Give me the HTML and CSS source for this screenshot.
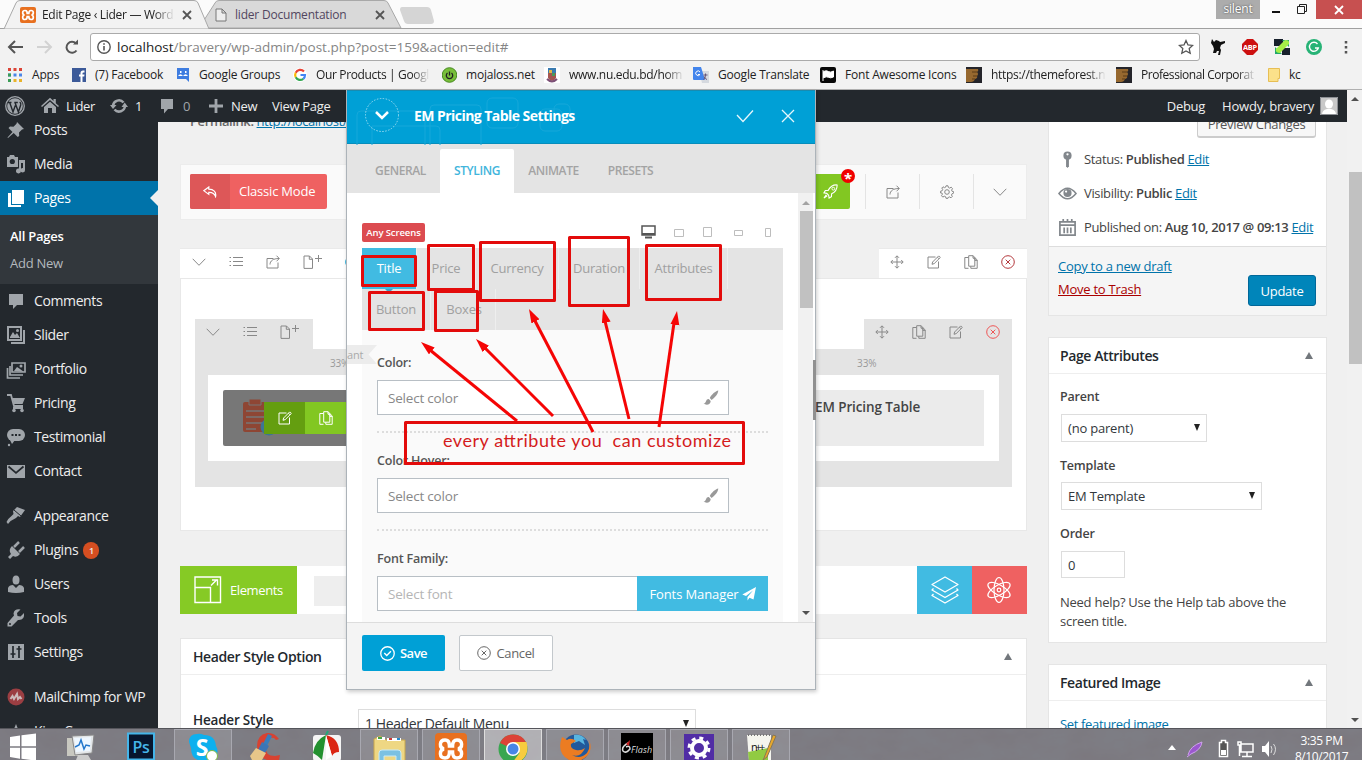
FILE: index.html
```html
<!DOCTYPE html>
<html lang="en">
<head>
<meta charset="utf-8">
<title>Edit Page ‹ Lider — WordPress</title>
<link rel="stylesheet" href="styles.css">
</head>
<body>
<svg class="defs" width="0" height="0">
  <defs>
    <symbol id="chev" viewBox="0 0 14 14"><path d="M.7 3.8 7 10.3l6.3-6.5" fill="none" stroke="currentColor"/></symbol>
    <symbol id="list" viewBox="0 0 14 14"><path d="M4 2.500h10M4 6.500h10M4 10.500h10M.5 2.500h1.500M.5 6.500h1.500M.5 10.500h1.500" fill="none" stroke="currentColor"/></symbol>
    <symbol id="share" viewBox="0 0 14 14"><path d="M7.500 3.500H1v9.500h11V7.500M4 9.500C4 6 7 3.500 13 3.500M10.500.7l2.800 2.800-2.800 2.800" fill="none" stroke="currentColor"/></symbol>
    <symbol id="newdoc" viewBox="0 0 20 14"><path d="M1 1h5.500L9.500 4v9.400H1zM6.300 1v3.300h3.200M12 3.500h7M15.500 0v7" fill="none" stroke="currentColor"/></symbol>
    <symbol id="move" viewBox="0 0 14 14"><path d="M7 1v12M1 7h12M5 2.800 7 .8l2 2M5 11.200l2 2 2-2M2.800 5l-2 2 2 2M11.200 5l2 2-2 2" fill="none" stroke="currentColor"/></symbol>
    <symbol id="edit" viewBox="0 0 14 14"><path d="M8.500 2H1v11h10.500V6.500M5 9.300l.6-2.300L11.700.9l1.600 1.600-6.100 6.100zM10.400 2.200 12 3.800" fill="none" stroke="currentColor"/></symbol>
    <symbol id="copy" viewBox="0 0 14 14"><path d="M4.500 13.300H.8V2.500h3.700M4.700.7h4.500l1.600 2v8.500H4.700zM9 .9v2.300h1.700M9.500 3h1.700l2 1.900v8.400H6.800v-2M11 3.200v2.200h2.200" fill="none" stroke="currentColor"/></symbol>
    <symbol id="xcirc" viewBox="0 0 14 14"><path d="M4.700 4.700l4.600 4.600M9.300 4.700 4.700 9.300" stroke="currentColor"/><circle cx="7" cy="7" r="6.300" fill="none" stroke="currentColor"/></symbol>
    <symbol id="okcirc" viewBox="0 0 14 14"><path d="M4 6.500l2.300 2.400 3.900-4" fill="none" stroke="currentColor" stroke-width="1.300"/><circle cx="7" cy="7" r="6.300" fill="none" stroke="currentColor" stroke-width="1.200"/></symbol>
    <symbol id="gear" viewBox="0 0 14 14"><circle cx="7" cy="7" r="2.300" fill="none" stroke="currentColor"/><path d="M6 .8h2l.4 1.700 1.300.6 1.500-.9 1.300 1.400-.9 1.500.5 1.200 1.600.4v1.400l-1.600.6-.6 1.300.8 1.500-1.300 1.300-1.500-.9-1.200.5L8 13.300H6l-.4-1.600-1.300-.5-1.500.9-1.300-1.400.9-1.500-.5-1.200L.6 8V6.200l1.500-.4.6-1.200-.9-1.600 1.200-1.200 1.600.9 1-.5z" fill="none" stroke="currentColor"/></symbol>
    <symbol id="rocket" viewBox="0 0 16 16"><path d="M15 1c-4-.3-7 1.200-9.500 5.800L2.500 7 1 9.500l3 .5 2 2 .5 3L9 13.500l.2-3C14 8 15.300 5 15 1zM3.500 11.500 1 15l3.500-2.500" fill="none" stroke="currentColor" stroke-width="1.200"/><circle cx="11" cy="5" r="1.500" fill="none" stroke="currentColor"/></symbol>
    <symbol id="reply" viewBox="0 0 14 12"><path d="M5.800 1 .8 4.700l5 3.700V6.300c3.500-.2 5.500.7 6.800 4.200C13.500 6 10.500 3.300 5.800 3.200z" fill="none" stroke="currentColor" stroke-width="1.200"/></symbol>
    <symbol id="brush" viewBox="0 0 16 16"><path d="M15.300.6c-3 .6-6.500 3.800-8.500 7.400l1.800 1.900C12 7.600 15 4.200 15.300.6zM5.800 8.900c-2 0-2.500 1.300-2.900 2.600C2.500 12.700 1.600 13.500.5 13.600c2.400 1.900 7.200 1.500 7.200-2.500z" fill="currentColor"/></symbol>
    <symbol id="bubble" viewBox="0 0 16 16"><path d="M2 1h12v10H9l-4 4.500V11H2z" fill="currentColor"/></symbol>
    <symbol id="cross" viewBox="0 0 12 12"><path d="M2 2l8 8M10 2l-8 8" stroke="currentColor" stroke-width="1.800"/></symbol>
    <symbol id="xampp" viewBox="0 0 16 16"><rect width="16" height="16" rx="2" fill="#e8701f"/><path d="M5 3.500c-3 0-3 4-.5 4.500-2.500.5-2.500 4.500.5 4.500 2 0 2.200-1.500 2.200-3h1.600c0 1.500.2 3 2.200 3 3 0 3-4 .5-4.500 2.500-.5 2.500-4.500-.5-4.500-2 0-2.200 1.500-2.200 3H7.200c0-1.500-.2-3-2.200-3z" fill="none" stroke="#fff" stroke-width="1.700"/></symbol>
    <symbol id="fist" viewBox="0 0 16 16"><path d="M0 0h16v16H0z" fill="#24242a"/><path d="M0 2h12q1 2-1 3 2 2 0 4 1 2-2 3-1 3-4 3H0z" fill="#96682f"/><path d="M6 5h5M7 9h4M6 12h3" stroke="#5b3a16"/></symbol>
  </defs>
</svg>

<div class="screen">
  <header class="chrome">
    <div class="tabstrip">
      <svg class="tabshapes" width="440" height="29"><path d="M199 28 215 3q1-2.500 4-2.500h165q3 0 4 2.500l13 25z" fill="#d9d9d9" stroke="#a8a8a8"/><path d="M0 28.500h1362" stroke="#a0a0a0"/><path d="M4 29 16 3q1-2.500 4-2.500h174q3 0 4 2.500L209 29z" fill="#f2f2f2" stroke="#a8a8a8"/><path d="M402 7h25q3 0 4 3l3 11q0 3-3 3h-23q-3 0-4-3l-4-11q0-3 2-3z" fill="#d5d5d5"/></svg>
      <div class="tab first"><svg width="16" height="16"><use href="#xampp"/></svg><span class="fade">Edit Page ‹ Lider — Word</span><svg class="tx" width="12" height="12"><use href="#cross"/></svg></div>
      <div class="tab second"><svg width="12" height="14"><path d="M1 1h6l4 4v8H1zM7 1v4h4" fill="#eee" stroke="#777"/></svg><span>lider Documentation</span><svg class="tx" width="12" height="12"><use href="#cross"/></svg></div>
      <div class="winctl"><span class="user">silent</span><svg width="56" height="19"><path d="M12 12h8" stroke="#111" stroke-width="2"/><path d="M37.500 6.500h7v7h-7zM39.500 6V4.500h7v7H45" fill="none" stroke="#222"/></svg><span class="wclose"><svg width="12" height="12"><use href="#cross"/></svg></span></div>
    </div>
    <div class="toolbar">
      <svg width="82" height="32"><g fill="none" stroke="#555" stroke-width="2"><path d="M15 12 9 18l6 6M9.500 18H23"/><path d="M45 12l6 6-6 6M50.500 18H37" stroke="#d2d2d2"/><path d="M76.500 21.500a5.500 5.500 0 1 1-.5-7"/><path d="M73 15.500h5V10.500z" fill="#555" stroke="none"/></g></svg>
      <div class="omni"><svg width="16" height="16"><circle cx="8" cy="8" r="6.200" fill="none" stroke="#555" stroke-width="1.400"/><path d="M8 7v4.500M8 4.200v1.600" stroke="#555" stroke-width="1.600"/></svg><span><b>localhost</b>/bravery/wp-admin/post.php?post=159&amp;action=edit#</span><svg class="star" width="16" height="16"><path d="M8 1.500l2 4.400 4.700.5-3.500 3.200 1 4.700L8 11.900l-4.200 2.400 1-4.700L1.300 6.400 6 5.900z" fill="none" stroke="#555" stroke-width="1.300"/></svg></div>
      <div class="ext">
        <svg width="16" height="16"><path d="M2 0l2 3 2-2 3 1 1 1 5-1v2l-4 2-1 3 1 2-1 5H8l1-4H7l-1 2H3l1-4-1-3-2-3z" fill="#111"/></svg>
        <svg width="16" height="16"><path d="M5 0h6l5 5v6l-5 5H5l-5-5V5z" fill="#cd1010"/><text x="8" y="11" font-size="7.500" font-weight="700" fill="#fff" text-anchor="middle" textLength="14" lengthAdjust="spacingAndGlyphs">ABP</text></svg>
        <svg width="16" height="16"><path d="M0 0h9v7H0zM8 9h8v7H8z" fill="#17202b"/><path d="M8 1h7v7zM1 8v7h7z" fill="#20a86a"/><path d="M2 10 11 1q5 0 4 4l-9 9q-5 0-4-4z" fill="#a5ee48"/></svg>
        <svg width="16" height="16"><circle cx="8" cy="8" r="8" fill="#27b376"/><path d="M11.500 5A4.500 4.500 0 1 0 12.300 9H9" fill="none" stroke="#fff" stroke-width="1.400"/></svg>
        <svg width="16" height="16"><path d="M8 2v2.500M8 7v2.500M8 12v2.500" stroke="#555" stroke-width="2.500"/></svg>
      </div>
    </div>
    <nav class="bookmarks">
      <a class="b1"><svg width="14" height="14"><g stroke-width="3" stroke-dasharray="3 2.500"><path d="M0 1.500h14" stroke="#dc4437"/><path d="M0 7h14" stroke="#4a86e8"/><path d="M0 12.500h14" stroke="#e9b32a"/><path d="M0 7h3M0 12.500h3" stroke="#3b9d55"/></g></svg><span>Apps</span></a>
      <a class="b2"><svg width="14" height="14"><rect width="14" height="14" fill="#3c5a99"/><path d="M8.500 14V8.500H7v-2h1.500V5q0-2.500 2.500-2.500h1.500v2h-1q-1 0-1 1v1h2l-.3 2h-1.700V14z" fill="#fff"/></svg><span>(7) Facebook</span></a>
      <a class="b3"><svg width="14" height="14"><path d="M1 0h12v14l-3-3H1z" fill="#3f7de0"/><path d="M2 8q2.500-3.500 5 0zM7 8q2.500-3.500 5 0z" fill="#fff"/><path d="M4 3h1.500v2H4zM9 3h1.500v2H9z" fill="#fff"/></svg><span>Google Groups</span></a>
      <a class="b4"><svg width="14" height="14"><rect width="14" height="14" rx="7" fill="#fff"/><g fill="none" stroke-width="2.200"><path d="M11 3.500A5 5 0 0 0 2.700 4.800" stroke="#e94335"/><path d="M2.700 4.800a5 5 0 0 0 0 4.500" stroke="#fabb05"/><path d="M2.700 9.300a5 5 0 0 0 7.600 1.500" stroke="#34a853"/><path d="M10.300 10.800A5 5 0 0 0 12 7H7.500" stroke="#4285f4"/></g></svg><span class="fade">Our Products | Googl</span></a>
      <a class="b5"><svg width="15" height="16"><circle cx="7.500" cy="8" r="7.300" fill="#78be3a" stroke="#468a20"/><path d="M5.500 6a3.200 3.200 0 1 0 4 0M7.500 4.500v4" fill="none" stroke="#222" stroke-width="1.300"/></svg><span>mojaloss.net</span></a>
      <a class="b6"><svg width="16" height="16"><path d="M0 0h16v16H0z" fill="#fff"/><path d="M4 1h8v5H4z" fill="#3b7bb0"/><path d="M4 6h8v5q-4 6-8 0z" fill="#a55650"/><path d="M5 3h3v3H5z" fill="#e4b743"/><path d="M8 6h3v3H8z" fill="#4a9b58"/><path d="M3 12q5 5 10 0" stroke="#7c5076" stroke-width="2" fill="none"/></svg><span class="fade">www.nu.edu.bd/hom</span></a>
      <a class="b7"><svg width="16" height="16"><path d="M6 4h10v12H9z" fill="#d5d9df"/><path d="M0 0h8l4 13H1q-1 0-1-1z" fill="#4284ec"/><path d="M7 5a2.300 2.300 0 1 0 0 2.500H5" fill="none" stroke="#fff"/><path d="M10.500 8h4M12.500 6.500V8q0 3-2 4.500M11 9.500q1 2.500 3 3" fill="none" stroke="#657"/></svg><span>Google Translate</span></a>
      <a class="b8"><svg width="16" height="16"><rect width="16" height="16" rx="2" fill="#080808"/><path d="M3 3v11M3.500 4.500q3-1.500 5 0t5-.5v6q-3 1.500-5 .3t-5 .5z" fill="#fff" stroke="#fff"/></svg><span>Font Awesome Icons</span></a>
      <a class="b9"><svg width="16" height="16"><use href="#fist"/></svg><span class="fade">https://themeforest.n</span></a>
      <a class="b10"><svg width="16" height="16"><use href="#fist"/></svg><span class="fade">Professional Corporat</span></a>
      <a class="b11"><svg width="12" height="14"><path d="M.5.500h11v10H10v3H.5z" fill="#fbe18a" stroke="#e7be54"/></svg><span>kc</span></a>
    </nav>
  </header>

  <div class="page">
    <div class="adminbar">
      <svg width="20" height="20" viewBox="0 0 20 20"><circle cx="10" cy="10" r="9.300" fill="none" stroke="#a0a5aa" stroke-width="1.300"/><circle cx="10" cy="10" r="7.800" fill="#a0a5aa"/><path d="M3 6.500h3.500M4.700 6.500l3.300 9.500 2.300-6.500M9.300 6.500h3.500M10 6.500l3.400 9.500 2.300-7q.5-2-1-3" fill="none" stroke="#23282d" stroke-width="1.400"/></svg>
      <svg class="a1" width="18" height="18"><path d="M0 9 9 .8l3.500 3.200V2h2.300v4.200L18 9l-1 1-8-7-8 7z" fill="#a0a5aa"/><path d="M3 10l6-5.300 6 5.300v6h-4v-5H7v5H3z" fill="#a0a5aa"/></svg><span class="a1t">Lider</span>
      <svg class="a2" width="18" height="18"><path d="M3 8.500a6 6 0 0 1 10.500-3M15 9a6 6 0 0 1-10.500 3.500" fill="none" stroke="#a0a5aa" stroke-width="2.500"/><path d="M0 8h6.500L3 12zM11.500 10H18l-3.300-4.500z" fill="#a0a5aa"/></svg><span class="a2t">1</span>
      <svg class="a3" width="16" height="16"><use href="#bubble"/></svg><span class="a3t">0</span>
      <svg class="a4" width="14" height="14"><path d="M7 0v14M0 7h14" stroke="#a0a5aa" stroke-width="2.800"/></svg><span class="a4t">New</span><span class="a5t">View Page</span>
      <span class="debug">Debug</span><span class="howdy">Howdy, bravery</span><svg width="18" height="18"><path d="M0 0h18v18H0z" fill="#c8c8c8"/><ellipse cx="9" cy="7" rx="4" ry="4.500" fill="#fff"/><path d="M2 18q0-5 5-6h4q5 1 5 6z" fill="#fff"/><path d="M.5.500h17v17H.5z" fill="none" stroke="#8c8f94"/></svg>
    </div>
    <div class="pagebody">
      <nav class="side">
        <a class="half"><svg viewBox="0 0 20 20"><path d="M11 2l7 7-2 .5-3 3 .2 3.500-1.500 1-4-4L2 18l-.5-.5L6.500 12l-4-4L4 6.500l3.500.3 3-3z" fill="currentColor"/></svg>Posts</a>
        <a><svg viewBox="0 0 20 20"><path d="M1 3h2l1-2h4l1 2h3v10H1z" fill="currentColor"/><circle cx="6.300" cy="7.500" r="2.600" fill="#23282d"/><path d="M13 6h6v10a2.200 2.200 0 1 1-2-2V9h-2v8a2.500 2.500 0 1 1-2-2.500z" fill="currentColor"/></svg>Media</a>
        <a class="current"><svg viewBox="0 0 20 20"><path d="M6 2h12v14H6z" fill="#fff"/><path d="M2 5h3v12h10v2H2z" fill="#fff"/></svg>Pages</a>
        <div class="submenu"><b>All Pages</b><span>Add New</span></div>
        <a><svg viewBox="0 0 20 20"><path d="M3 3h14v11h-6l-4 4v-4H3z" fill="currentColor"/></svg>Comments</a>
        <a><svg viewBox="0 0 20 20"><path d="M2 2h13v13H2zM5 18h13V5" fill="none" stroke="currentColor" stroke-width="2"/><path d="M4 12l3-5 2 3 2-2 3 5H4z" fill="currentColor"/><circle cx="11.500" cy="5.500" r="1.500" fill="currentColor"/></svg>Slider</a>
        <a><svg viewBox="0 0 20 20"><path d="M6 4h13v9H6zM4 7v9h13M1.500 9v10H14" fill="none" stroke="currentColor" stroke-width="1.700"/><path d="M8 12l3-4 3 2 4 3z" fill="currentColor"/><circle cx="15" cy="7" r="1.500" fill="currentColor"/></svg>Portfolio</a>
        <a><svg viewBox="0 0 20 20"><path d="M1 2h4l3 11h9M7 15h10" fill="none" stroke="currentColor" stroke-width="1.800"/><path d="M6 5h13l-2.500 6H8z" fill="currentColor"/><circle cx="8" cy="17.500" r="1.800" fill="currentColor"/><circle cx="16" cy="17.500" r="1.800" fill="currentColor"/></svg>Pricing</a>
        <a><svg viewBox="0 0 20 20"><rect x="1" y="2" width="18" height="12" rx="6" fill="currentColor"/><path d="M4 13h5l-3 4z" fill="currentColor"/><circle cx="3" cy="18" r="1.200" fill="currentColor"/><path d="M5.500 8h2M9 8h2M12.500 8h2" stroke="#23282d" stroke-width="2"/></svg>Testimonial</a>
        <a><svg viewBox="0 0 20 20"><path d="M1 4h18v13H1z" fill="currentColor"/><path d="M2.500 5.500 10 12l7.500-6.500" fill="none" stroke="#23282d" stroke-width="1.700"/></svg>Contact</a>
        <a class="gap"><svg viewBox="0 0 20 20"><path d="M7 5l4-4 8 3-5 7-2-1-2 2q-5 2-8 6l-1.500-2q1-3 5-6l2-2z" fill="currentColor"/><path d="M8 4l7 6" stroke="#23282d"/></svg>Appearance</a>
        <a><svg viewBox="0 0 20 20"><path d="M6 6l8 8q-3 4-7 2l-3 3-2-2 3-3q-3-4 1-8z" fill="currentColor"/><path d="M8 7l5-5M13 12l5-5" stroke="currentColor" stroke-width="2.500"/></svg>Plugins<i>1</i></a>
        <a><svg viewBox="0 0 20 20"><ellipse cx="10" cy="6" rx="3.500" ry="4.500" fill="currentColor"/><path d="M2 18v-4q1-3 5-3l3 3 3-3q4 0 5 3v4q-8 2-16 0z" fill="currentColor"/></svg>Users</a>
        <a><svg viewBox="0 0 20 20"><path d="M18 5l-3.500 3.500-3-.5-.5-3L14.500 1.500q-6-1-7 4l.5 2L1.500 15v3.500h4L12 12q7 .5 6-7z" fill="currentColor"/><circle cx="4" cy="16" r="1" fill="#23282d"/></svg>Tools</a>
        <a><svg viewBox="0 0 20 20"><path d="M2 2h16v16H2z" fill="currentColor"/><path d="M7 4v12M13 4v12M4.500 12h5M10.500 7h5" stroke="#23282d" stroke-width="1.700"/></svg>Settings</a>
        <a class="gap"><svg viewBox="0 0 20 20"><circle cx="10" cy="10" r="8.500" fill="#9b3e42"/><path d="M4.500 12l2-3 1.500 3 3-5 1 5 2-2 1.500 2" fill="none" stroke="#cbb" stroke-width="2"/></svg>MailChimp for WP</a>
        <a><svg viewBox="0 0 20 20"><path d="M10 3l2 5h6l-5 4 2 6-5-4-5 4 2-6-5-4h6z" fill="currentColor"/></svg>King Composer</a>
      </nav>

      <main class="content">
        <div class="maincol">
          <div class="permalink"><b>Permalink:</b> <u>http://localhost/bravery/</u></div>
          <section class="topbox">
            <button class="classic"><span><svg width="14" height="12"><use href="#reply"/></svg></span>Classic Mode</button>
            <div class="topright">
              <button class="rocket"><svg width="15" height="15"><use href="#rocket"/></svg><em>*</em></button>
              <div class="cell"><svg width="14" height="14"><use href="#share"/></svg></div>
              <div class="cell"><svg width="14" height="14"><use href="#gear"/></svg></div>
              <div class="cell"><svg width="14" height="14"><use href="#chev"/></svg></div>
            </div>
          </section>
          <section class="row">
            <div class="rowbar">
              <div class="rl"><svg width="14" height="14"><use href="#chev"/></svg><svg width="14" height="14"><use href="#list"/></svg><svg width="14" height="14"><use href="#share"/></svg><svg width="20" height="14"><use href="#newdoc"/></svg><em></em></div>
              <div class="rr"><svg width="14" height="14"><use href="#move"/></svg><svg width="14" height="14"><use href="#edit"/></svg><svg width="14" height="14"><use href="#copy"/></svg><svg class="red" width="14" height="14"><use href="#xcirc"/></svg></div>
            </div>
            <div class="rowbody">
              <div class="colbar">
                <div class="cl"><svg width="14" height="14"><use href="#chev"/></svg><svg width="14" height="14"><use href="#list"/></svg><svg width="20" height="14"><use href="#newdoc"/></svg></div>
                <div class="cr"><svg width="14" height="14"><use href="#move"/></svg><svg width="14" height="14"><use href="#copy"/></svg><svg width="14" height="14"><use href="#edit"/></svg><svg class="red2" width="14" height="14"><use href="#xcirc"/></svg></div>
              </div>
              <div class="cols">
                <div class="pct"><span>33%</span><span class="p2">33%</span></div>
                <div class="white">
                  <div class="dark"><svg width="34" height="40"><rect x="2" y="3" width="24" height="30" rx="2" fill="#8e4634"/><path d="M8 0h12v6H8z" fill="#8e4634" stroke="#777" stroke-width="1"/><path d="M5 12h18M5 18h18M5 24h18M5 30h10" stroke="#777" stroke-width="1.300"/><circle cx="28" cy="28" r="8.500" fill="#3d7594"/></svg>
                    <div class="gr"><span class="g1"><svg width="14" height="14"><use href="#edit"/></svg></span><span class="g2"><svg width="14" height="14"><use href="#copy"/></svg></span></div></div>
                  <div class="light"><b>EM Pricing Table</b></div>
                </div>
              </div>
            </div>
          </section>
          <section class="elements">
            <div class="elbtn"><svg width="28" height="28"><path d="M1 1h25.500v25.500H1zM1 11.500h15.500v15M17 9.500l6-6M18 4h5.500v5.500" fill="none" stroke="#fff" stroke-width="1.400"/></svg><span>Elements</span></div>
            <div class="elgray"></div>
            <div class="elr"><span class="eb"><svg width="28" height="28"><g fill="none" stroke="#fff" stroke-width="1.300" stroke-linejoin="round"><path d="M14 1 27 8.500 14 16 1 8.500zM2.500 12.500 1 14l13 7.500L27 14l-1.500-1.500M2.500 18 1 19.500 14 27l13-7.500-1.500-1.500"/></g></svg></span><span class="er"><svg width="28" height="28"><g fill="none" stroke="#fff" stroke-width="1.200"><ellipse cx="13" cy="14" rx="5" ry="12.500"/><ellipse cx="13" cy="14" rx="5" ry="12.500" transform="rotate(60 13 14)"/><ellipse cx="13" cy="14" rx="5" ry="12.500" transform="rotate(-60 13 14)"/><circle cx="13" cy="14" r="1.800"/></g></svg></span></div>
          </section>
          <section class="opt">
            <div class="opth"><b>Header Style Option</b><i class="tri"></i></div>
            <div class="optb"><b>Header Style</b><div class="sel wide"><span>1 Header Default Menu</span><i></i></div></div>
          </section>
        </div>
        <aside class="meta">
          <section class="pub">
            <button class="prev">Preview Changes</button>
            <p><svg viewBox="0 0 20 20"><circle cx="10" cy="6" r="4.300" fill="#82878c"/><path d="M8.500 9h3v8L10 19l-1.500-2z" fill="#82878c"/><circle cx="10" cy="4.500" r="1.200" fill="#fff"/></svg><span>Status: <b>Published</b> <u>Edit</u></span></p>
            <p><svg viewBox="0 0 20 20"><path d="M1 10q9-11 18 0-9 11-18 0z" fill="none" stroke="#82878c" stroke-width="1.600"/><circle cx="10" cy="9.500" r="4.300" fill="#82878c"/><circle cx="8.500" cy="8" r="1.200" fill="#fff"/></svg><span>Visibility: <b>Public</b> <u>Edit</u></span></p>
            <p><svg viewBox="0 0 20 20"><path d="M2 4h16v14H2zM2 7.500h16M5.500 1v4M14.500 1v4M10 1v4" fill="none" stroke="#82878c" stroke-width="1.800"/><path d="M6.500 10v6M10 10v6M13.500 10v6" stroke="#82878c" stroke-width="1.800"/></svg><span>Published on: <b>Aug 10, 2017 @ 09:13</b> <u>Edit</u></span></p>
            <div class="pubfoot"><div><u>Copy to a new draft</u><u class="trash">Move to Trash</u></div><button class="update">Update</button></div>
          </section>
          <section class="attr">
            <div class="mh"><b>Page Attributes</b><i class="tri"></i></div>
            <b class="lb l1">Parent</b>
            <div class="sel s1"><span>(no parent)</span><i></i></div>
            <b class="lb">Template</b>
            <div class="sel s2"><span>EM Template</span><i></i></div>
            <b class="lb">Order</b>
            <div class="sel s3"><span>0</span></div>
            <div class="help">Need help? Use the Help tab above the<br>screen title.</div>
          </section>
          <section class="feat">
            <div class="mh"><b>Featured Image</b><i class="tri"></i></div>
            <u>Set featured image</u>
          </section>
        </aside>
      </main>
    </div>
    <div class="vscroll"><i class="up"></i><div class="thumb"></div><i class="down"></i></div>
  </div>

  <footer class="taskbar">
    <svg class="texture" width="1362" height="32"><filter id="n"><feTurbulence type="fractalNoise" baseFrequency=".03 .05" numOctaves="5" seed="8"/><feColorMatrix values="0 0 0 0 .2  0 0 0 0 .18  0 0 0 0 .2  1.100 0 0 0 -.35"/></filter><rect width="1362" height="32" filter="url(#n)"/></svg>
    <span><svg width="28" height="32"><path d="M1 9l10-1.500v10.800H1zM12.500 7.300 27 5.500v12.800H12.500zM1 19.700h10v11L1 29zM12.500 19.700H27v13l-14.500-2z" fill="#fff"/></svg></span>
    <span><svg width="32" height="32"><path d="M3 10h12v18H3z" fill="#c8c8c0"/><path d="M8 8l22-1-2 18-17 2z" fill="#e3e6e8" stroke="#888"/><path d="M10 10l17-1-1 14-14 1z" fill="#eef7ff"/><path d="M11 19l4-2 2-5 3 9 2-4 4 1" fill="none" stroke="#2478cc" stroke-width="1.500"/><path d="M14 27h10l3 5H12z" fill="#ccc"/></svg></span>
    <span><svg width="30" height="32"><rect x="2" y="5.500" width="26" height="26" fill="#07162e" stroke="#45b5e9" stroke-width="2"/><text x="15" y="25" font-size="16" font-weight="600" fill="#45b5e9" text-anchor="middle">Ps</text></svg></span>
    <span class="tile"><svg width="30" height="32"><path d="M1 13q0-8 8-8 3-1 7 1 11 0 12 11 3 5 0 11-3 5-8 4H14Q3 31 3 19z" fill="#0db0ee"/><text x="14" y="27" font-size="23" font-weight="700" fill="#fff" text-anchor="middle">S</text><circle cx="24" cy="27" r="5.500" fill="#fff" stroke="#7fb944"/></svg></span>
    <span><svg width="34" height="32"><path d="M31 11Q26 4 19 5 9 7 9 18t10 14h12l1-5-5 1q-10 0-10-10t9-8l2 2z" fill="#d84231"/><path d="M20 6l4 2-5 10-4-2z" fill="#397dbd"/><path d="M14 14l7 4-4 7-9 1z" fill="#3c75b6"/><path d="M8 20l10 5-4 7H4l-2-4z" fill="#e8c689"/></svg></span>
    <span><svg width="32" height="32"><rect x="2" y="7" width="28" height="26" rx="3" fill="#f4f4f4"/><path d="M2 25Q4 12 15 7L11 32q-5-5-9-7z" fill="#23902f"/><path d="M15 7q13 3 13 17-5 0-7 4z" fill="#db2512"/><path d="M15 7l6 21-6 4z" fill="#fff"/><path d="M15 7l2-4" stroke="#2a7" stroke-width="2"/></svg></span>
    <span class="tile"><svg width="34" height="32"><path d="M2 10l6-3 6 4h19v22H2z" fill="#eed783" stroke="#c7a64c"/><path d="M5 8h8v3H5zM15 9h14v3H15z" fill="#fff"/><path d="M6 8h4v2H6z" fill="#49a646"/><path d="M17 9h3v2h-3z" fill="#c33"/><path d="M25 9h3v2h-3z" fill="#28c"/><path d="M7 24q0-3 3-3h16q3 0 3 3v8h-5v-5H12v5H7z" fill="#7bc1e2" stroke="#c8eaf7"/></svg></span>
    <span class="tile"><svg width="32" height="32"><use href="#xampp" x="0" y="4" width="32" height="32"/></svg></span>
    <span class="tile active"><svg width="30" height="32"><circle cx="15" cy="20" r="14.500" fill="#39a650"/><path d="M15 20 2 14A14.500 14.500 0 0 1 28.500 14H15z" fill="#dc4237"/><path d="M15 13h13.500q4 15-10 21l-3-2 6-8z" fill="#f8cc3f"/><circle cx="15" cy="20" r="7" fill="#fff"/><circle cx="15" cy="20" r="5.500" fill="#4886e6"/></svg></span>
    <span class="tile"><svg width="32" height="32"><circle cx="17" cy="19" r="13.500" fill="#22599b"/><path d="M15 6q8-1 12 5l-3-1 2 6-6-4-5 2z" fill="#58b5df"/><path d="M3 8l5 3q4-3 9 1l-5 3q-1 5 5 6 5 1 9-2-4 10-13 7 8 5 15-2 4-6 2-13 4 9-2 16-8 8-18 4Q-3 24 3 8z" fill="#ec7c22"/></svg></span>
    <span class="tile"><svg width="32" height="32"><path d="M0 4h32v28H0z" fill="#000"/><text x="10" y="24" font-size="9" font-style="italic" fill="#ddd" textLength="21">Flash</text><path d="M7 14q-7 4-5 8 3 3 7-2 0-4-4-2" fill="none" stroke="#ddd" stroke-width="1.500"/><path d="M5 15l4-4-1 6" fill="#c22"/></svg></span>
    <span class="tile"><svg width="32" height="32"><path d="M1 5h30v27H1z" fill="#512da5"/><circle cx="16" cy="19" r="7" fill="none" stroke="#fff" stroke-width="4"/><circle cx="16" cy="19" r="10" fill="none" stroke="#fff" stroke-width="3" stroke-dasharray="4 3.850"/></svg></span>
    <span class="tile"><svg width="32" height="32"><path d="M2 6h24v26H4z" fill="#f5f5ee"/><path d="M3 23l20-4v13H4z" fill="#91cb42"/><path d="M3 6h22" stroke="#777" stroke-width="2" stroke-dasharray="1 2"/><text x="6" y="22" font-size="11" fill="#111" textLength="14">n++</text><path d="M19 29 28 6l3 1-9 21-4 3z" fill="#e7a82b" stroke="#875"/></svg></span>
    <div class="tray"><svg width="135" height="32"><path d="M14 22h8l-4-5z" fill="#fff"/><path d="M34 27q2-9 14-13-1 8-11 12l-4 3" fill="#9b57cf" stroke="#cfa3ec"/><path d="M65.500 14.500h2v-2h4v2h2v14h-8z" fill="#555" stroke="#fff" stroke-width="1.500"/><path d="M67 22h5v5h-5z" fill="#fff"/><path d="M87 16h12v8H87zM93 24v4M88 28.500h10M84 14h3v3h-3zM85.500 17v11" fill="none" stroke="#fff" stroke-width="1.500"/><path d="M108 18h3l4-5v16l-4-5h-3z" fill="#fff"/><path d="M117 18q2 3 0 7M119.500 16q4 5 0 11" fill="none" stroke="#ddd"/></svg><div class="clock">3:35 PM<br>8/10/2017</div></div>
  </footer>

  <div class="modal">
    <div class="mhead">
      <svg class="deco" width="240" height="54"><g fill="none" stroke="#16a8da"><path d="M10 54V24q0-4 4-4h58q6 0 6 6v28M25 54V35h64q4 0 4 4v15M83 54V18q0-4 4-4h43q4 0 4 4v36"/><rect x="140" y="7" width="31" height="30" rx="5"/><rect x="193" y="18" width="22" height="22" rx="5"/><rect x="207" y="13" width="16" height="16" rx="5"/></g></svg>
      <svg class="dd" width="36" height="36"><circle cx="18" cy="18" r="16.500" fill="none" stroke="#9cdcf2" stroke-dasharray="1.500 1.500"/><path d="M12 15l6 6 6-6" fill="none" stroke="#fff" stroke-width="2.500"/></svg>
      <b>EM Pricing Table Settings</b>
      <svg class="ok" width="18" height="14"><path d="M1 6l6 6.500L17 1.500" fill="none" stroke="#e6f7fc" stroke-width="1.300"/></svg>
      <svg class="no" width="14" height="14"><path d="M1 1l12 12M13 1 1 13" stroke="#e6f7fc" stroke-width="1.300"/></svg>
    </div>
    <div class="mtabs"><span class="t1">GENERAL</span><span class="t2">STYLING</span><span class="t3">ANIMATE</span><span class="t4">PRESETS</span></div>
    <div class="mbody">
      <div class="mmain">
        <div class="screens"><b>Any Screens</b><svg width="140" height="18"><g fill="none" stroke="#bdbdbd"><path d="M2 4h13v9H2z" stroke="#555" stroke-width="1.500"/><path d="M2 12h13" stroke="#555" stroke-width="2"/><path d="M5 15.500h7" stroke="#555" stroke-width="2"/><path d="M34.500 7.500h9v7h-9zM63.500 5.500h8v9h-8zM94.500 8.500h8v5h-8zM125.500 6.500h5v8h-5z"/></g></svg></div>
        <div class="subtabs">
          <div class="st"><span class="on">Title</span><span class="x2">Price</span><span class="x3">Currency</span><span class="x4">Duration</span><span class="x5">Attributes</span></div>
          <div class="st"><span class="y1">Button</span><span class="y2">Boxes</span></div>
        </div>
        <div class="fields">
          <label>Color:</label>
          <div class="inp"><span>Select color</span><svg width="16" height="16"><use href="#brush"/></svg></div>
          <hr>
          <label>Color Hover:</label>
          <div class="inp"><span>Select color</span><svg width="16" height="16"><use href="#brush"/></svg></div>
          <hr>
          <label>Font Family:</label>
          <div class="font"><span>Select font</span><b>Fonts Manager <svg width="14" height="14"><path d="M14 0 11.500 12.500l-4-1.700L5.500 13.500V10L11 3.500 4 9 .3 7.600z" fill="#fff"/></svg></b></div>
        </div>
      </div>
      <div class="mscroll"><i class="up"></i><div class="thumb"></div><i class="down"></i></div>
      <div class="ribbon">ant</div>
    </div>
    <div class="mfoot"><button class="save"><svg width="15" height="15"><use href="#okcirc"/></svg>Save</button><button class="cancel"><svg width="14" height="14"><use href="#xcirc"/></svg>Cancel</button></div>
    <div class="grip"></div>
  </div>

  <svg class="notes" width="400" height="250">
    <defs><marker id="ah" markerWidth="14" markerHeight="10" refX="14" refY="4.500" orient="auto" markerUnits="userSpaceOnUse"><path d="M0 0 14 4.500 0 9z" fill="#f50505"/></marker></defs>
    <g fill="none" stroke="#e30b0b" stroke-width="3" stroke-linejoin="round">
      <rect x="12.500" y="26.500" width="53" height="29"/><rect x="78.500" y="15.500" width="45" height="44"/><rect x="130.500" y="12.500" width="74" height="58"/><rect x="219.500" y="7.500" width="59" height="68"/><rect x="296.500" y="15.500" width="74" height="54"/><rect x="19.500" y="62.500" width="54" height="37"/><rect x="85.500" y="61.500" width="42" height="39"/><rect x="55.500" y="192.500" width="338" height="41"/>
    </g>
    <g fill="none" stroke="#f50505" stroke-width="3"><path d="M167 191 80 120"/><path d="M203 186 134 117"/><path d="M243 202 184 89"/><path d="M279 189 255 91"/><path d="M309 197 324 93"/></g>
    <g fill="none" stroke="none" marker-end="url(#ah)"><path d="M167 191 71 112"/><path d="M203 186 126 109"/><path d="M243 202 179 79"/><path d="M279 189 253 79"/><path d="M309 197 327 81"/></g>
    <text x="93" y="217" font-size="18" fill="#d41c1c" xml:space="preserve" textLength="288">every attribute you  can customize</text>
  </svg>
</div>
</body>
</html>
```
FILE: styles.css
```css
* { box-sizing: border-box; }
body { margin: 0; font: 13px/20px "Open Sans", "Noto Sans", sans-serif; letter-spacing: -.2px; color: #444; overflow: hidden; }
button { font: inherit; letter-spacing: inherit; border: 0; padding: 0; margin: 0; }
svg { display: block; flex: none; }
b { font-weight: 600; }
i, em { font-style: normal; }
u { color: #0073aa; }
.defs { position: absolute; }
.screen { width: 1362px; height: 760px; position: relative; overflow: hidden; display: flex; flex-direction: column; }

/* browser window */
.chrome { height: 90px; background: #f2f2f2; border-bottom: 1px solid #b0b0b0; color: #222; font-size: 12px; flex: none; }
.tabstrip { height: 29px; background: #fbfbfb; border-bottom: 1px solid #a0a0a0; display: flex; position: relative; }
.tabshapes { position: absolute; left: 0; top: 0; }
.tab { position: relative; display: flex; align-items: center; height: 30px; gap: 6px; white-space: nowrap; letter-spacing: -.2px; }
.tab .tx { margin-left: auto; color: #555; }
.first { width: 193px; padding-left: 20px; }
.first span { width: 134px; letter-spacing: -.3px; }
.second { width: 193px; padding-left: 22px; gap: 8px; color: #514660; }
.fade { overflow: hidden; -webkit-mask-image: linear-gradient(90deg, #000 84%, transparent); mask-image: linear-gradient(90deg, #000 84%, transparent); }
.winctl { margin-left: auto; display: flex; height: 19px; }
.user { background: #acacac; width: 44px; text-align: center; color: #fff; line-height: 18px; text-shadow: 0 0 2px #333; }
.wclose { background: #c75050; width: 46px; display: flex; align-items: center; justify-content: center; color: #fff; }
.toolbar { height: 32px; display: flex; align-items: flex-start; }
.omni { margin: 4px 0 0 8px; width: 1110px; height: 28px; border: 1px solid #aaa; border-radius: 3px; background: #fff; display: flex; align-items: center; padding: 0 5px; gap: 5px; color: #858585; font-size: 13.500px; letter-spacing: 0; }
.omni b { font-weight: 400; color: #222; }
.star { margin-left: auto; }
.ext { display: flex; padding: 10px 0 0 10px; gap: 16px; }
.bookmarks { display: flex; height: 28px; align-items: center; padding-left: 8px; letter-spacing: -.2px; }
.bookmarks a { display: flex; align-items: center; gap: 9px; white-space: nowrap; flex: none; }
.b1 { width: 64px; } .b2 { width: 104px; } .b3 { width: 117px; } .b4 { width: 149px; } .b5 { width: 102px; } .b6 { width: 149px; } .b7 { width: 127px; } .b8 { width: 146px; } .b9 { width: 150px; } .b10 { width: 152px; }
.bookmarks .b1 { gap: 10px; }
.b4 span { width: 114px; letter-spacing: -.35px; } .b6 span { width: 115px; letter-spacing: -.3px; } .b9 span, .b10 span { width: 115px; letter-spacing: -.45px; }
.b9 span { letter-spacing: -.3px; }

/* admin page */
.page { height: 638px; flex: none; display: grid; grid-template: 32px 606px / 1347px 15px; }
.adminbar { background: #23282d; color: #eee; display: flex; align-items: center; padding: 0 9px 0 5px; font-size: 13px; letter-spacing: -.3px; }
.a1 { margin-left: 16px; } .a1t { margin-left: 7px; width: 29px; }
.a2 { margin-left: 15px; } .a2t { margin-left: 7px; width: 8px; }
.a3 { margin-left: 16px; color: #a0a5aa; } .a3t { margin-left: 8px; width: 8px; color: #a0a5aa; }
.a4 { margin-left: 18px; } .a4t { margin-left: 8px; width: 27px; } .a5t { margin-left: 14px; }
.debug { margin-left: auto; } .howdy { margin: 0 6px 0 17px; letter-spacing: -.2px; }
.pagebody { grid-row: 2; grid-column: 1; display: flex; overflow: hidden; }
.vscroll { grid-column: 2; grid-row: 1 / 3; background: #f1f1f1; display: flex; flex-direction: column; align-items: center; }
.up, .down { border: 4px solid transparent; width: 0; height: 0; margin-left: 1px; }
.up { border-bottom-color: #505050; border-top: 0; margin-top: 7px; }
.down { border-top-color: #505050; border-bottom: 0; margin-top: auto; margin-bottom: 6px; }
.vscroll .thumb { width: 13px; height: 192px; background: #c1c1c1; margin: 71px 0 0 2px; }

.side { width: 158px; flex: none; background: #23282d; color: #eee; font-size: 14px; letter-spacing: -.38px; overflow: hidden; }
.side a { display: flex; align-items: center; height: 34px; padding-left: 6px; gap: 8px; position: relative; white-space: nowrap; }
.side a svg { width: 20px; height: 20px; color: #a0a5aa; }
.side a.half { height: 25px; padding-bottom: 9px; }
.side .current { background: #0073aa; color: #fff; }
.current::after { content: ""; position: absolute; right: 0; top: 9px; border: 8px solid transparent; border-right-color: #f0f0f0; border-left: 0; }
.submenu { background: #32373c; height: 69px; padding: 8px 10px; display: grid; line-height: 27px; font-size: 13px; letter-spacing: -.25px; color: #b4b9be; }
.submenu b { color: #fff; }
.side .gap { margin-top: 11px; }
.side a i { background: #d54e21; width: 16px; height: 17px; line-height: 17px; border-radius: 9px; font-size: 9px; text-align: center; margin-left: -3px; font-weight: 600; }

.content { flex: 1; background: #f0f0f0; display: flex; padding-left: 22px; gap: 21px; }
.maincol { width: 847px; flex: none; color: #888; }
.permalink { height: 42px; padding: 0 10px; margin-top: -11px; margin-bottom: 11px; font-size: 13px; letter-spacing: -.4px; color: #666; }
.topbox { height: 56px; background: #fafafa; border: 1px solid #ececec; display: flex; justify-content: space-between; padding: 9px 0 0 9px; }
.classic { width: 137px; height: 35px; display: flex; align-items: center; gap: 9px; background: #ef6161; color: #fff; border-radius: 2px; line-height: 18px; padding-bottom: 1px; overflow: hidden; }
.classic span { width: 40px; height: 36px; background: #dd5758; display: grid; place-items: center; margin-bottom: -1px; }
.topright { display: flex; }
.rocket { background: #82c722; color: #fff; width: 40px; height: 35px; display: grid; place-items: center; margin-right: 15px; position: relative; border-radius: 2px; }
.rocket em { position: absolute; right: -5px; top: -5px; width: 14px; height: 14px; border-radius: 7px; background: #f00000; font-size: 15px; line-height: 19px; font-weight: 700; }
.cell { width: 54px; height: 35px; border-left: 1px solid #e4e4e4; display: grid; place-items: center; }
.cell:last-child { width: 53px; }
.row { margin-top: 28px; height: 283px; }
.rowbar { display: flex; justify-content: space-between; height: 30px; }
.rl, .rr, .cl, .cr { display: flex; align-items: center; gap: 23px; background: #fff; padding-bottom: 4px; }
.rl { padding-left: 12px; width: 400px; border-top: 1px solid #eaeaea; }
.rl em { width: 10px; height: 10px; border-radius: 5px; background: #41bbe2; margin-left: -1px; }
.rr { width: 148px; padding-left: 11px; border-top: 1px solid #eaeaea; }
.red { color: #b4383c; }
.red2 { color: #ee5555; }
.rowbody { height: 253px; background: #fff; border: 1px solid #e8e8e8; padding: 40px 14px 0; }
.colbar { display: flex; justify-content: space-between; height: 30px; }
.cl, .cr { background: #e4e4e4; }
.cl { width: 118px; padding-left: 11px; } .cr { width: 148px; padding-left: 11px; }
.cols { background: #e4e4e4; height: 138px; padding: 0 13px; }
.pct { height: 26px; padding-left: 122px; display: flex; font-size: 10px; line-height: 29px; color: #999; }
.p2 { margin-left: 508px; }
.white { height: 86px; background: #fff; padding: 15px; display: flex; }
.dark { width: 200px; height: 56px; background: #777; border-radius: 2px; padding: 9px 0 0 18px; display: flex; }
.gr { display: flex; margin: 3px 0 0 -11px; }
.gr span { width: 41px; height: 32px; display: grid; place-items: center; color: #fff; }
.g1 { background: #649e10; } .g2 { background: #82c722; }
.light { margin-left: 200px; flex: 1; background: #ebebeb; padding: 7px 0 0 192px; color: #444; font-size: 13.500px; letter-spacing: -.1px; }
.elements { height: 48px; margin-top: 35px; background: #fff; display: flex; }
.elbtn { width: 117px; background: #86ca25; color: #fff; display: flex; align-items: center; gap: 8px; padding-left: 14px; font-size: 13px; letter-spacing: -.4px; }
.elgray { width: 300px; height: 30px; background: #eee; margin: 10px 17px; }
.elr { margin-left: auto; display: flex; }
.elr span { width: 55px; display: grid; place-items: center; }
.eb { background: #41bbe2; } .er { background: #ef6161; }
.opt { margin-top: 24px; background: #fff; border: 1px solid #e5e5e5; height: 120px; color: #23282d; }
.opth, .mh { display: flex; justify-content: space-between; align-items: center; height: 36px; border-bottom: 1px solid #eee; padding: 0 14px 0 12px; font-size: 14px; letter-spacing: -.4px; color: #23282d; }
.tri { border: 4px solid transparent; border-bottom: 7px solid #72777c; border-top: 0; }
.opth b { padding-top: 1px; }
.optb { display: flex; padding: 34px 12px 0; justify-content: space-between; font-size: 13.500px; }
.optb > b { padding-top: 1px; }
.wide { width: 338px; margin-right: 318px; font-size: 14px; letter-spacing: -.4px; padding-top: 2px !important; }
.sel { height: 28px; border: 1px solid #ddd; background: #fff; display: flex; justify-content: space-between; align-items: center; padding: 0 6px 0 6px; color: #32373c; }
.sel i { border: 3.500px solid transparent; border-top: 7px solid #222; border-bottom: 0; margin-top: -2px; }

.meta { width: 279px; flex: none; }
.meta section { background: #fff; border: 1px solid #e5e5e5; }
.pub { height: 204px; border-top: 0 !important; letter-spacing: -.35px; }
.prev { display: block; width: 119px; height: 26px; margin: -10px 10px 4px auto; border: 1px solid #ccc; border-bottom-width: 2px; border-radius: 3px; background: #f7f7f7; color: #555; padding-bottom: 1px; line-height: 20px; }
.pub p { margin: 0; height: 34px; display: flex; align-items: center; padding-left: 9px; gap: 7px; white-space: nowrap; }
.pub p svg { width: 19px; height: 19px; }
.pubfoot { margin-top: 2px; height: 69px; background: #f5f5f5; border-top: 1px solid #ddd; display: flex; justify-content: space-between; padding: 9px 10px 0 9px; letter-spacing: -.25px; }
.pubfoot div { display: grid; grid-auto-rows: 23px; }
.pubfoot .trash { color: #a00; }
.update { width: 68px; height: 31px; background: #0085ba; border: 1px solid #006799; border-radius: 3px; color: #fff; margin-top: 19px; }
.attr { margin-top: 21px; height: 306px; }
.meta .mh { padding: 0 13px 0 11px; }
.lb { display: block; margin: 22px 0 5px 11px; line-height: 18px; font-size: 12.500px; }
.l1 { margin-top: 14px; margin-bottom: 8px; }
.lb + .sel { margin-left: 12px; }
.s1 { width: 146px; } .s2 { width: 201px; } .s3 { width: 64px; height: 27px; }
.s1 + .lb { margin-top: 15px; margin-bottom: 7px; }
.s2 + .lb { margin-top: 15px; margin-bottom: 8px; }
.help { margin: 15px 0 0 11px; line-height: 19px; letter-spacing: -.26px; }
.feat { margin-top: 21px; height: 110px; }
.feat u { display: block; margin: 13px 11px; letter-spacing: -.35px; }

/* settings popup */
.modal { position: absolute; left: 346px; top: 90px; width: 470px; height: 600px; border: 1px solid #acb3b9; border-top: 0; background: #fff; box-shadow: 1px 2px 4px #0003; }
.mhead { height: 54px; background: #00a0d6; border-bottom: 1px solid #068dbb; border-top: 1px solid #198bb0; display: flex; align-items: center; color: #fff; font-size: 14px; letter-spacing: -.55px; position: relative; padding-bottom: 2px; }
.mhead b { margin-left: 14px; font-weight: 700; position: relative; }
.deco { position: absolute; left: 0; top: 0; }
.dd { margin-left: 17px; position: relative; top: -1px; }
.ok { margin-left: auto; } .no { margin: 0 20px 0 27px; }
.mtabs { height: 49px; background: #e4e4e4; display: flex; padding-top: 5px; font-size: 12px; font-weight: 600; color: #a3a3a3; letter-spacing: -.4px; }
.mtabs span { line-height: 44px; text-align: center; }
.t1 { width: 93px; padding-left: 14px; } .t2 { width: 74px; background: #fff; color: #41b5dc; border-radius: 2px 2px 0 0; } .t3 { width: 79px; } .t4 { width: 75px; }
.mbody { height: 429px; display: flex; position: relative; overflow: hidden; }
.mmain { width: 451px; padding: 29px 15px 0; }
.mscroll { width: 15px; background: #f1f1f1; margin-left: auto; margin-right: 2px; display: flex; flex-direction: column; align-items: center; }
.mscroll .up { border-bottom-color: #a3a3a3; margin-top: 8px; }
.mscroll .thumb { width: 13px; height: 97px; background: #c1c1c1; margin: 6px 0 0 2px; }
.mscroll .down { margin-bottom: 7px; }
.screens { display: flex; justify-content: space-between; height: 26px; }
.screens b { background: #dc4b50; color: #fff; width: 63px; height: 20px; margin-top: 1px; height: 19px; line-height: 19px; font-size: 9.500px; text-align: center; border-radius: 2px; letter-spacing: -.1px; white-space: nowrap; }
.screens svg { margin-right: 3px; }
.subtabs { background: #e4e4e4; color: #a0a0a0; font-size: 13px; }
.st { display: flex; height: 41px; line-height: 41px; }
.st span { border-right: 1px solid #eee; text-align: center; }
.on { width: 55px; background: #41bbe2; color: #fff; }
.on::after { content: ""; display: block; width: 0; margin: 0 auto; border: 4px solid transparent; border-top-color: #3ba4cb; border-bottom: 0; }
.st .x2 { width: 59px; } .x3 { width: 83px; } .x4 { width: 81px; } .x5 { width: 88px; } .y1 { width: 69px; } .y2 { width: 65px; padding-left: 2px; }
.fields { background: #fafafa; height: 300px; padding: 23px 15px 0; }
.fields label { display: block; font-weight: 600; font-size: 12.500px; color: #555; height: 27px; }
.inp, .font span { border: 1px solid #b8bfc5; background: #fff; height: 35px; width: 352px; display: flex; align-items: center; justify-content: space-between; padding: 0 9px 0 10px; color: #888; font-size: 13.500px; }
.inp svg { color: #999; }
.fields hr { border: 0; border-top: 2px dotted #ddd; margin: 16px 0 18px; }
.font { display: flex; }
.font span { width: 260px; border-right: 0; color: #b5b5b5; }
.font b { width: 131px; background: #41bbe2; color: #fff; display: flex; align-items: center; justify-content: center; gap: 3px; letter-spacing: -.1px; font-weight: 500; }
.ribbon { position: absolute; left: 0; top: 152px; width: 30px; height: 19px; background: #ececec; color: #aaa; font-size: 11px; line-height: 19px; clip-path: polygon(0 0, 100% 0, 72% 50%, 100% 100%, 0 100%); }
.mfoot { height: 67px; background: #f4f4f4; border-top: 1px solid #ddd; padding: 12px 15px; display: flex; gap: 14px; }
.mfoot button { height: 36px; display: flex; align-items: center; justify-content: center; gap: 5px; border-radius: 2px; }
.save { width: 83px; background: #00a0d6; color: #fff; font-weight: 600; letter-spacing: -.5px; }
.cancel { width: 94px; background: #fff; border: 1px solid #c3c8cc !important; color: #666; letter-spacing: -.35px; }
.grip { position: absolute; right: -1px; top: 270px; width: 3px; height: 60px; background: #909090; }
.notes { position: absolute; left: 350px; top: 230px; font-family: Lato, "Open Sans", sans-serif; letter-spacing: 0; }

/* desktop taskbar */
.taskbar { height: 32px; background: #7d7d84; border-top: 1px solid #55555b; display: flex; position: relative; overflow: hidden; }
.texture { position: absolute; left: 0; top: 0; }
.taskbar > span { width: 58px; height: 33px; display: flex; justify-content: center; margin-right: 4px; position: relative; flex: none; }
.taskbar > span > svg { margin-top: -1px; }
.taskbar > span:nth-of-type(1) { margin: 0 -1px 0 -6px; }
.taskbar > span:nth-of-type(2) { margin-right: 3px; }
.taskbar > .tile { border: 1px solid #a8a8b0; background: #ffffff20; }
.taskbar > .active { background: #ffffff66; border-color: #ddd; }
.tray { margin-left: auto; display: flex; position: relative; color: #fff; font-size: 12px; letter-spacing: -.4px; }
.tray > svg { margin: -1px -8px 0 8px; }
.clock { width: 81px; text-align: center; line-height: 16px; padding-top: 4px; }
```
